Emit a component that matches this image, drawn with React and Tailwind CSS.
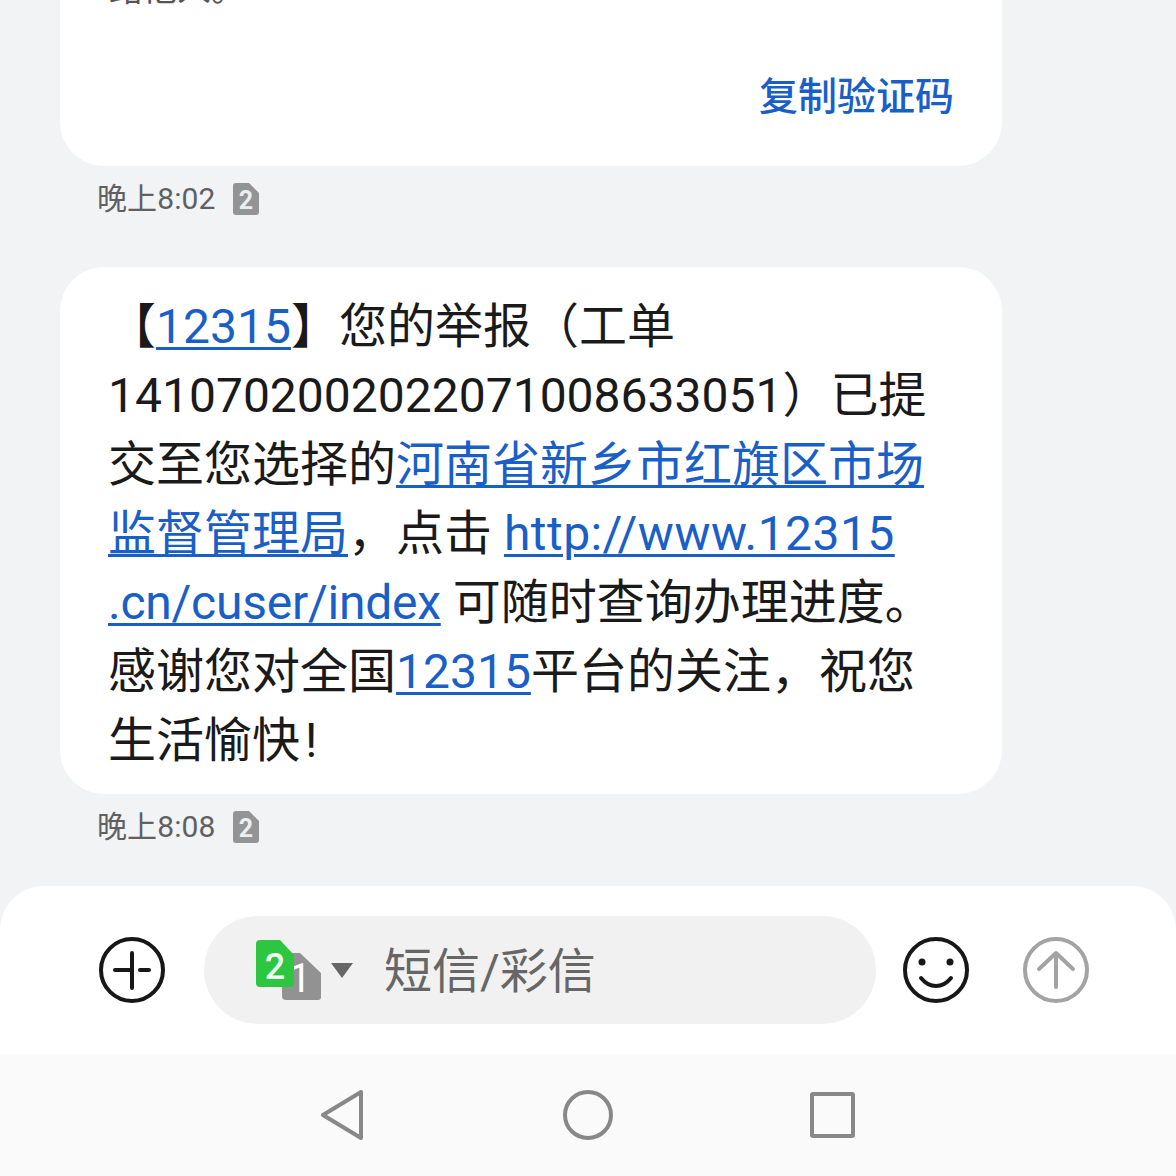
const cjk = { fontFamily: 'Roboto, "Noto Sans CJK SC", sans-serif' };

const Link = ({ children, className = '' }) => (
  <span className={`text-[#1a5fc8] underline decoration-[3px] underline-offset-[4px] ${className}`}>{children}</span>
);

const SimBadge = () => (
  <svg width="28" height="34" viewBox="0 0 28 34" className="block">
    <path d="M4 1h13l10 10v19a3 3 0 0 1-3 3H4a3 3 0 0 1-3-3V4a3 3 0 0 1 3-3z" fill="#929496" />
    <text x="14" y="27" textAnchor="middle" fontSize="25" fontWeight="700" fill="#eceeef" fontFamily="Roboto">2</text>
  </svg>
);

const TimeRow = ({ time }) => (
  <div className="flex h-[34px] items-center gap-[16px] pl-[97px] text-[30px] leading-[34px] text-[#5f6062]">
    <span className="w-[119px] whitespace-nowrap tracking-[0.1px]">{time}</span>
    <SimBadge />
  </div>
);

const PlusIcon = () => (
  <svg width="66" height="66" viewBox="0 0 66 66" fill="none" stroke="#171717" strokeLinecap="round" className="shrink-0">
    <circle cx="33" cy="33" r="31" strokeWidth="4" />
    <path d="M33 16v35M16 33h17M41 33h9" strokeWidth="4" />
  </svg>
);

const SmileIcon = () => (
  <svg width="66" height="66" viewBox="0 0 66 66" fill="none" stroke="#171717" className="shrink-0">
    <circle cx="33" cy="33" r="31" strokeWidth="4" />
    <circle cx="19" cy="25" r="3.5" fill="#171717" stroke="none" />
    <circle cx="47" cy="25" r="3.5" fill="#171717" stroke="none" />
    <path d="M18 41c4 5 9 8 15 8s11-3 15-8" strokeWidth="4" strokeLinecap="round" />
  </svg>
);

const SendIcon = () => (
  <svg width="66" height="66" viewBox="0 0 66 66" fill="none" stroke="#a3a3a3" strokeWidth="4" strokeLinecap="round" strokeLinejoin="round" className="shrink-0">
    <circle cx="33" cy="33" r="31" />
    <path d="M33 50V17M16 32l17-16 17 16" />
  </svg>
);

const DualSim = () => (
  <svg width="66" height="70" viewBox="0 0 66 70" className="mt-[10px] block shrink-0">
    <path d="M30 13h14l21 20v24a3 3 0 0 1-3 3H30a4 4 0 0 1-4-4V17a4 4 0 0 1 4-4z" fill="#929292" />
    <text x="44" y="52" textAnchor="middle" fontSize="40" fill="#fff" fontFamily="Roboto">1</text>
    <path d="M4 0h20l14 15v29a3 3 0 0 1-3 3H4a4 4 0 0 1-4-4V4a4 4 0 0 1 4-4z" fill="#2cc640" />
    <text x="19" y="39" textAnchor="middle" fontSize="36" fontWeight="500" fill="#f0fff0" fontFamily="Roboto">2</text>
  </svg>
);

export default function App() {
  return (
    <div className="flex h-[1176px] w-[1176px] flex-col overflow-hidden bg-[#f1f3f5]" style={cjk}>
      <div className="flex-1 overflow-hidden">
        {/* card cut off at the top */}
        <div className="mx-[60px] -mt-[100px] h-[266px] w-[942px] rounded-[44px] bg-white pl-[49px] pr-[48px] pt-[69px]">
          <div className="text-[34px] leading-[40px] text-[#555555]">路他人。</div>
          <div className="mt-[63px] text-right text-[39px] font-medium leading-[50px] text-[#1a5fc8]">复制验证码</div>
        </div>
        <div className="mt-[16px]">
          <TimeRow time="晚上8:02" />
        </div>

        <div className="ml-[60px] mt-[51px] h-[527px] w-[942px] rounded-[44px] bg-white pl-[48px] pt-[25px] text-[48px] leading-[69px] text-[#1a1a1a]">
          <div className="whitespace-nowrap">【<Link>12315</Link>】您的举报（工单</div>
          <div className="whitespace-nowrap">1410702002022071008633051）已提</div>
          <div className="whitespace-nowrap">交至您选择的<Link>河南省新乡市红旗区市场</Link></div>
          <div className="whitespace-nowrap"><Link>监督管理局</Link>，点击 <Link className="tracking-[0.45px]">http://www.12315</Link></div>
          <div className="whitespace-nowrap"><Link className="tracking-[-0.25px]">.cn/cuser/index</Link> 可随时查询办理进度。</div>
          <div className="whitespace-nowrap">感谢您对全国<Link>12315</Link>平台的关注，祝您</div>
          <div className="whitespace-nowrap">生活愉快<span className="ml-[5px]">!</span></div>
        </div>
        <div className="mt-[16px]">
          <TimeRow time="晚上8:08" />
        </div>
      </div>

      {/* input bar */}
      <div className="flex h-[168px] shrink-0 items-start rounded-t-[44px] bg-white pt-[30px]">
        <div className="ml-[99px] mt-[21px]"><PlusIcon /></div>
        <div className="ml-[39px] flex h-[108px] w-[672px] items-center rounded-[54px] bg-[#f1f1f1] pl-[52px]">
          <DualSim />
          <div className="ml-[9px] h-0 w-0 border-x-[11px] border-t-[15px] border-x-transparent border-t-[#666666]" />
          <span className="ml-[31px] mt-[2px] text-[48px] leading-[69px] text-[#666666]">短信/彩信</span>
        </div>
        <div className="ml-[27px] mt-[21px]"><SmileIcon /></div>
        <div className="ml-[54px] mt-[21px]"><SendIcon /></div>
      </div>

      {/* system nav */}
      <div className="flex h-[122px] shrink-0 items-start bg-[#fafafa] pl-[320px] pt-[36px]">
        <svg width="44" height="50" viewBox="0 0 44 50" fill="none" stroke="#888888" strokeWidth="4" strokeLinejoin="round">
          <path d="M3 25 41 2v46z" />
        </svg>
        <svg width="50" height="50" viewBox="0 0 50 50" fill="none" stroke="#888888" strokeWidth="4" className="ml-[199px]">
          <circle cx="25" cy="25" r="23" />
        </svg>
        <div className="ml-[197px] mt-[2px] h-[46px] w-[45px] rounded-[3px] border-4 border-[#888888]" />
      </div>
    </div>
  );
}
